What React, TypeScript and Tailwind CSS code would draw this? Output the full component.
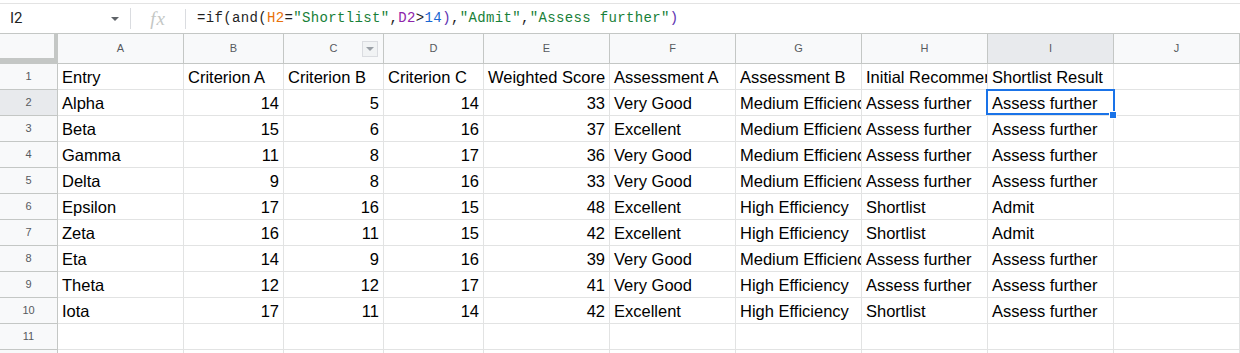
import React from "react";

// column layout: letter, width class, numeric?
const columns = [
  { letter: "A", w: "w-[126px]", num: false },
  { letter: "B", w: "w-[100px]", num: true },
  { letter: "C", w: "w-[100px]", num: true },
  { letter: "D", w: "w-[100px]", num: true },
  { letter: "E", w: "w-[126px]", num: true },
  { letter: "F", w: "w-[126px]", num: false },
  { letter: "G", w: "w-[126px]", num: false },
  { letter: "H", w: "w-[126px]", num: false },
  { letter: "I", w: "w-[126px]", num: false },
  { letter: "J", w: "flex-1", num: false },
];

const headerRow = [
  "Entry",
  "Criterion A",
  "Criterion B",
  "Criterion C",
  "Weighted Score",
  "Assessment A",
  "Assessment B",
  "Initial Recommendation",
  "Shortlist Result",
  "",
];

const rows = [
  ["Alpha", "14", "5", "14", "33", "Very Good", "Medium Efficiency", "Assess further", "Assess further"],
  ["Beta", "15", "6", "16", "37", "Excellent", "Medium Efficiency", "Assess further", "Assess further"],
  ["Gamma", "11", "8", "17", "36", "Very Good", "Medium Efficiency", "Assess further", "Assess further"],
  ["Delta", "9", "8", "16", "33", "Very Good", "Medium Efficiency", "Assess further", "Assess further"],
  ["Epsilon", "17", "16", "15", "48", "Excellent", "High Efficiency", "Shortlist", "Admit"],
  ["Zeta", "16", "11", "15", "42", "Excellent", "High Efficiency", "Shortlist", "Admit"],
  ["Eta", "14", "9", "16", "39", "Very Good", "Medium Efficiency", "Assess further", "Assess further"],
  ["Theta", "12", "12", "17", "41", "Very Good", "High Efficiency", "Assess further", "Assess further"],
  ["Iota", "17", "11", "14", "42", "Excellent", "High Efficiency", "Shortlist", "Assess further"],
];

const sans = { fontFamily: '"Liberation Sans", Arial, sans-serif' };
const mono = { fontFamily: '"Liberation Mono", "DejaVu Sans Mono", monospace' };

function FormulaBar() {
  return (
    <div className="h-[34px] pt-[3px] border-b border-[#c4c7c5] bg-white">
      <div className="h-full border-t border-[#e3e3e3] flex items-center">
        <div className="w-[130px] flex items-center pl-[10px] pr-[11px] justify-between">
          <span className="text-[15px] text-[#1f1f1f] font-['Roboto',sans-serif]">I2</span>
          <span className="w-0 h-0 border-x-[4px] border-x-transparent border-t-[4px] border-t-[#5f6368]" />
        </div>
        <div className="w-px h-[21px] bg-[#dadce0]" />
        <div className="w-[54px] flex justify-center">
          <span className="text-[19px] italic text-[#c4c7c5] tracking-[1px] font-['Liberation_Serif',serif] leading-none">
            fx
          </span>
        </div>
        <div className="w-px h-[20px] bg-[#dadce0]" />
        <div className="pl-[11px] text-[14px] tracking-[0.35px] text-[#1f1f1f] whitespace-pre" style={mono}>
          <span>=if(and(</span>
          <span className="text-[#e8710a]">H2</span>
          <span>=</span>
          <span className="text-[#188038]">"Shortlist"</span>
          <span>,</span>
          <span className="text-[#8e24aa]">D2</span>
          <span>&gt;</span>
          <span className="text-[#1967d2]">14</span>
          <span className="text-[#5e35b1]">)</span>
          <span>,</span>
          <span className="text-[#188038]">"Admit"</span>
          <span>,</span>
          <span className="text-[#188038]">"Assess further"</span>
          <span className="text-[#5e35b1]">)</span>
        </div>
      </div>
    </div>
  );
}

function ColumnHeaders() {
  return (
    <div className="flex h-[30px] bg-[#f8f9fa]" style={sans}>
      <div className="w-[58px] h-full border-r-4 border-b-[6px] border-[#c4c7c5]" />
      {columns.map((c) => (
        <div
          key={c.letter}
          className={`${c.w} relative h-full flex items-center justify-center border-r border-b border-[#c4c7c5] text-[11px] text-[#575a5e] ${
            c.letter === "I" ? "bg-[#e8eaed]" : ""
          }`}
        >
          {c.letter}
          {c.letter === "C" && (
            <div className="absolute right-[5px] top-[7px] w-[16px] h-[16px] border border-[#dadce0] bg-[#f1f3f4] flex items-center justify-center">
              <span className="w-0 h-0 border-x-[4px] border-x-transparent border-t-[4px] border-t-[#9aa0a6]" />
            </div>
          )}
        </div>
      ))}
    </div>
  );
}

function Row({ n, cells, selectedRow }: { n: number; cells: string[]; selectedRow?: boolean }) {
  return (
    <div className="flex h-[26px]" style={sans}>
      <div
        className={`w-[58px] h-full flex items-center justify-center border-r border-b border-[#c4c7c5] text-[11px] text-[#575a5e] ${
          selectedRow ? "bg-[#e8eaed]" : "bg-[#f8f9fa]"
        }`}
      >
        {n}
      </div>
      {columns.map((c, i) => {
        const value = cells[i] ?? "";
        const isSelected = selectedRow && c.letter === "I";
        return (
          <div
            key={c.letter}
            className={`${c.w} relative h-full border-r border-b border-[#e2e3e3] ${isSelected ? "z-10" : ""}`}
          >
            <div
              className={`h-full flex items-center pt-[1px] px-[4px] overflow-hidden whitespace-nowrap text-[16.5px] text-black ${
                c.num && n > 1 ? "justify-end" : "justify-start"
              }`}
            >
              {value}
            </div>
            {isSelected && (
              <>
                <div className="absolute -left-[2px] -right-[2px] -top-[1px] bottom-0 border-2 border-[#1a73e8]" />
                <div className="absolute -right-[4px] -bottom-[4px] w-[8px] h-[8px] bg-[#1a73e8] border border-white" />
              </>
            )}
          </div>
        );
      })}
    </div>
  );
}

export default function App() {
  return (
    <div className="w-[1240px] h-[353px] overflow-hidden bg-white">
      <FormulaBar />
      <ColumnHeaders />
      <Row n={1} cells={headerRow} />
      {rows.map((r, i) => (
        <Row key={i} n={i + 2} cells={r} selectedRow={i === 0} />
      ))}
      <Row n={11} cells={[]} />
      <Row n={12} cells={[]} />
    </div>
  );
}
